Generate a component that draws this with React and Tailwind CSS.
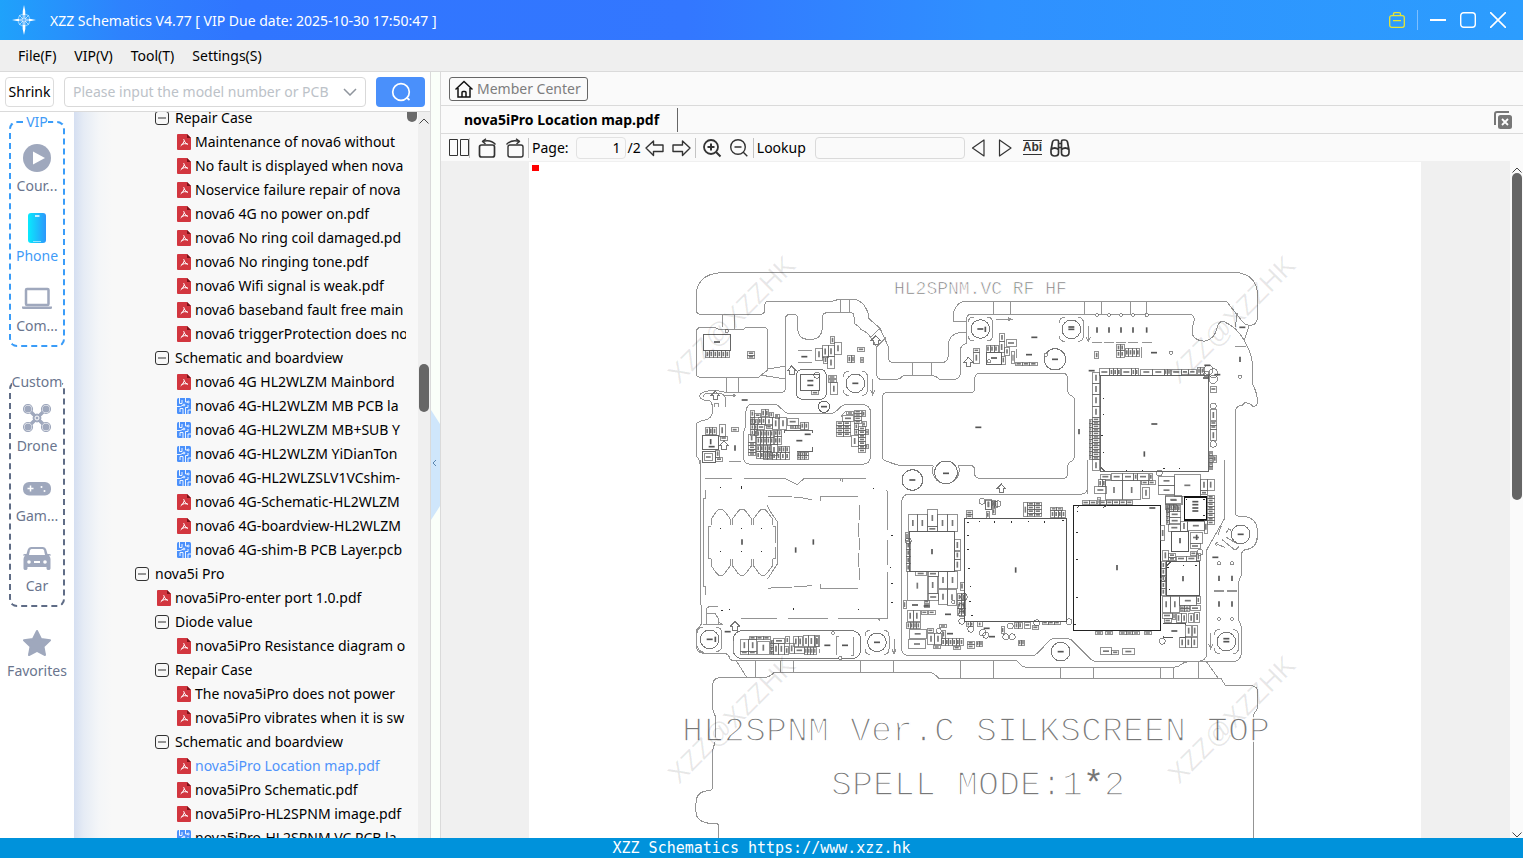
import React, { useState } from "react";

const tree = [
  { level: 2, kind: "folder", name: "Repair Case" },
  { level: 3, kind: "pdf", name: "Maintenance of nova6 without" },
  { level: 3, kind: "pdf", name: "No fault is displayed when nova" },
  { level: 3, kind: "pdf", name: "Noservice failure repair of nova" },
  { level: 3, kind: "pdf", name: "nova6 4G no power on.pdf" },
  { level: 3, kind: "pdf", name: "nova6 No ring coil damaged.pd" },
  { level: 3, kind: "pdf", name: "nova6 No ringing tone.pdf" },
  { level: 3, kind: "pdf", name: "nova6 Wifi signal is weak.pdf" },
  { level: 3, kind: "pdf", name: "nova6 baseband fault free main" },
  { level: 3, kind: "pdf", name: "nova6 triggerProtection does no" },
  { level: 2, kind: "folder", name: "Schematic and boardview" },
  { level: 3, kind: "pdf", name: "nova6 4G HL2WLZM Mainbord" },
  { level: 3, kind: "pcb", name: "nova6 4G-HL2WLZM MB PCB la" },
  { level: 3, kind: "pcb", name: "nova6 4G-HL2WLZM MB+SUB Y" },
  { level: 3, kind: "pcb", name: "nova6 4G-HL2WLZM YiDianTon" },
  { level: 3, kind: "pcb", name: "nova6 4G-HL2WLZSLV1VCshim-" },
  { level: 3, kind: "pdf", name: "nova6 4G-Schematic-HL2WLZM" },
  { level: 3, kind: "pdf", name: "nova6 4G-boardview-HL2WLZM" },
  { level: 3, kind: "pcb", name: "nova6 4G-shim-B PCB Layer.pcb" },
  { level: 1, kind: "folder", name: "nova5i Pro" },
  { level: 2, kind: "pdf", name: "nova5iPro-enter port 1.0.pdf" },
  { level: 2, kind: "folder", name: "Diode value" },
  { level: 3, kind: "pdf", name: "nova5iPro Resistance diagram o" },
  { level: 2, kind: "folder", name: "Repair Case" },
  { level: 3, kind: "pdf", name: "The nova5iPro does not power" },
  { level: 3, kind: "pdf", name: "nova5iPro vibrates when it is sw" },
  { level: 2, kind: "folder", name: "Schematic and boardview" },
  { level: 3, kind: "pdf", name: "nova5iPro Location map.pdf", active: true },
  { level: 3, kind: "pdf", name: "nova5iPro Schematic.pdf" },
  { level: 3, kind: "pdf", name: "nova5iPro-HL2SPNM image.pdf" },
  { level: 3, kind: "pcb", name: "nova5iPro-HL2SPNM VC PCB la" },
];

const indent = { 1: "pl-[61px]", 2: "pl-[81px]", 3: "pl-[101px]" };

const Minus = () => (
  <svg viewBox="0 0 14 14" className="h-3.5 w-3.5 shrink-0" fill="none" stroke="#333">
    <rect x=".5" y=".5" width="13" height="13" rx="2.5" />
    <path d="M3 7h8" />
  </svg>
);

const PdfIcon = () => (
  <svg viewBox="0 0 14 16" className="h-4 w-3.5 shrink-0">
    <path d="M1 0h9l4 4v11a1 1 0 0 1-1 1H1a1 1 0 0 1-1-1V1a1 1 0 0 1 1-1z" fill="#d2363f" />
    <path d="M10 0l4 4h-4z" fill="#7c1219" />
    <path
      d="M6.700 5.500q.6 3.200 3.600 4.800M7 7.500q-.8 2.700-3 4.200M4.800 10.300q2.500-1.200 5.700-.4"
      fill="none"
      stroke="#fff"
      strokeLinecap="round"
    />
  </svg>
);

const PcbIcon = () => (
  <svg viewBox="0 0 14 16" className="h-4 w-3.5 shrink-0">
    <rect width="14" height="16" rx="1.500" fill="#4a90fb" />
    <g fill="none" stroke="#fff" strokeWidth=".9">
      <path d="M2.500 0v5.500H5V2M8.500 0v4h2M0 8.500h3.500L6 7.200M8.500 16V9.500H11V7M6 16v-5.500H3V14M11 16v-4h3" />
      <circle cx="11.300" cy="4" r=".9" />
      <circle cx="7" cy="7" r=".9" />
    </g>
  </svg>
);

const TreeRow = ({ item, active, onSelect }) => (
  <li className="first:-mt-1.5">
    <button
      type="button"
      onClick={onSelect}
      className={`flex h-6 w-full items-center whitespace-nowrap text-left ${indent[item.level]} ${
        item.kind === "folder" ? "gap-1.5" : "gap-1"
      } ${active ? "text-[#4f93fb]" : "text-black"}`}
    >
      {item.kind === "folder" && <Minus />}
      {item.kind === "pdf" && <span className="pl-0.5"><PdfIcon /></span>}
      {item.kind === "pcb" && <span className="pl-0.5"><PcbIcon /></span>}
      <span>{item.name}</span>
    </button>
  </li>
);

const icons = {
  course: (
    <svg viewBox="0 0 28 28" className="h-7 w-7">
      <circle cx="14" cy="14" r="14" fill="#9fa8bd" />
      <path d="M10 7.500v13l12-6.500z" fill="#fff" />
    </svg>
  ),
  phone: (
    <svg viewBox="0 0 28 30" className="h-[30px] w-7">
      <defs>
        <linearGradient id="phone">
          <stop offset="0" stopColor="#09eafd" />
          <stop offset="1" stopColor="#2d97fb" />
        </linearGradient>
      </defs>
      <rect x="5" width="18" height="30" rx="3" fill="url(#phone)" />
      <path d="M12 3h4.500" stroke="#fff" strokeWidth="1.500" />
      <path d="M10 28.500h8" stroke="#8fe6ff" />
    </svg>
  ),
  computer: (
    <svg viewBox="0 0 30 28" className="h-7 w-[30px]" fill="none" stroke="#9fa8bd">
      <rect x="4" y="5" width="22.500" height="16" rx="1" strokeWidth="2.500" />
      <path d="M0 22.500h30v1.500q0 1-1.500 1h-27Q0 25 0 24z" fill="#9fa8bd" stroke="none" />
    </svg>
  ),
  drone: (
    <svg viewBox="0 0 28 28" className="h-7 w-7" fill="none" stroke="#9fa8bd">
      <path d="M5 5l18 18M23 5L5 23" strokeWidth="3.500" />
      {[[5, 5], [23, 5], [5, 23], [23, 23]].map(([x, y]) => (
        <g key={`${x}${y}`}>
          <circle cx={x} cy={y} r="4.500" fill="#fff" strokeWidth="1.200" />
          <circle cx={x} cy={y} r="3.500" fill="#9fa8bd" stroke="none" />
        </g>
      ))}
      <circle cx="14" cy="14" r="4" fill="#9fa8bd" />
      <circle cx="14" cy="14" r="2" stroke="#fff" />
    </svg>
  ),
  game: (
    <svg viewBox="0 0 28 28" className="h-7 w-7">
      <rect y="8" width="28" height="13.500" rx="6" fill="#9fa8bd" />
      <path d="M4.500 14.500h6M7.500 11.500v6" stroke="#fff" strokeWidth="1.500" />
      <circle cx="18.500" cy="13" r="1" fill="#fff" />
      <circle cx="21.500" cy="17" r="1" fill="#fff" />
    </svg>
  ),
  car: (
    <svg viewBox="0 0 28 28" className="h-7 w-7">
      <path
        d="M8 3h12q2.500 0 3.200 2.500L24.500 10h2q1.500 0 1.500 1.500H26q1.500 1.500 1.500 3.500v9.500q0 1.500-2 1.500t-2-1.500V23h-19v1.500q0 1.500-2 1.500t-2-1.500V15q0-2 1.500-3.500H0Q0 10 1.500 10h2l1.300-4.500Q5.500 3 8 3z"
        fill="#9fa8bd"
      />
      <path d="M8.500 5h11q1.200 0 1.600 1.500L22 11H6l.9-4.500Q7.300 5 8.500 5z" fill="#fff" />
      <circle cx="6" cy="18" r="1.800" fill="#fff" />
      <circle cx="22" cy="18" r="1.800" fill="#fff" />
      <path d="M11 18h6" stroke="#fff" strokeWidth="2" />
    </svg>
  ),
  star: (
    <svg viewBox="0 0 28 28" className="h-7 w-7">
      <path
        d="M14 2l4 8 9 1.300-6.500 6.300L22 26l-8-4.200L6 26l1.500-8.400L1 11.300 10 10z"
        fill="#9fa8bd"
        stroke="#9fa8bd"
        strokeWidth="2"
        strokeLinejoin="round"
      />
    </svg>
  ),
};

const NavItem = ({ icon, label, active }) => (
  <button
    type="button"
    className={`flex w-full flex-col items-center gap-1 leading-5 ${active ? "text-[#3f9bf7]" : "text-[#6a758e]"}`}
  >
    <span className="flex h-7 items-center justify-center">{icons[icon]}</span>
    <span>{label}</span>
  </button>
);

const NavRail = () => (
  <nav className="flex w-[74px] shrink-0 flex-col bg-white">
    <fieldset className="mx-[9px] rounded-lg border-2 border-dashed border-[#3a9cf8] pt-3 pb-[9px]">
      <legend className="mx-auto leading-5 text-[#3f9bf7]">VIP</legend>
      <div className="flex flex-col gap-[18px]">
        <NavItem icon="course" label="Cour..." />
        <NavItem icon="phone" label="Phone" active />
        <NavItem icon="computer" label="Com..." />
      </div>
    </fieldset>
    <fieldset className="mx-[9px] mt-[25px] rounded-lg border-2 border-dashed border-[#5f6c86] pt-3 pb-[9px]">
      <legend className="mx-auto leading-5 text-[#6a758e]">Custom</legend>
      <div className="flex flex-col gap-[18px]">
        <NavItem icon="drone" label="Drone" />
        <NavItem icon="game" label="Gam..." />
        <NavItem icon="car" label="Car" />
      </div>
    </fieldset>
    <div className="mt-[22px]">
      <NavItem icon="star" label="Favorites" />
    </div>
  </nav>
);

const Logo = () => (
  <svg viewBox="0 0 24 30" className="h-[30px] w-6">
    <circle cx="12" cy="15" r="6" fill="none" stroke="#7cc8ff" strokeWidth="1.200" />
    <path d="M7 10l10 10M17 10L7 20" stroke="#a8dbff" />
    <path d="M12 0q2 6 1.300 13.700Q18 13.500 24 15q-6 1.500-10.700 1.300Q14 24 12 30q-2-6-1.300-13.700Q6 16.500 0 15q6-1.500 10.700-1.300Q10 6 12 0z" fill="#fff" />
    <path d="M12 10v10M7 15h10" stroke="#3aa0fb" />
  </svg>
);

const TitleBar = () => (
  <header className="flex h-10 shrink-0 items-center bg-[linear-gradient(90deg,#1fa2fb_0%,#2e82fd_8%,#3075ff_16%,#3377ff_45%,#2f90ff_65%,#2c9dfe_100%)] pr-[17px] pl-3 text-white">
    <Logo />
    <h1 className="ml-3.5 flex-1 pt-px">XZZ Schematics V4.77 [ VIP Due date: 2025-10-30 17:50:47 ]</h1>
    <button type="button" aria-label="Toolbox">
      <svg viewBox="0 0 16 16" className="h-4 w-4" fill="none" stroke="#e6e534" strokeWidth="1.300">
        <rect x=".7" y="3.700" width="14.600" height="11.600" rx="2" />
        <path d="M4.500 3.700V2q0-1.300 1.300-1.300h4.400q1.300 0 1.300 1.300v1.700M4 8.700h8" />
      </svg>
    </button>
    <span className="ml-3 h-5 w-px bg-[#7dbfff]" />
    <button type="button" aria-label="Minimize" className="ml-3">
      <svg viewBox="0 0 16 16" className="h-4 w-4" stroke="#fff" strokeWidth="2"><path d="M0 8h16" /></svg>
    </button>
    <button type="button" aria-label="Maximize" className="ml-3.5">
      <svg viewBox="0 0 16 16" className="h-4 w-4" fill="none" stroke="#fff" strokeWidth="1.400">
        <rect x=".7" y=".7" width="14.600" height="14.600" rx="3" />
      </svg>
    </button>
    <button type="button" aria-label="Close" className="ml-3.5">
      <svg viewBox="0 0 16 16" className="h-4 w-4" stroke="#fff" strokeWidth="1.600"><path d="M0 0l16 16M16 0L0 16" /></svg>
    </button>
  </header>
);

const MenuBar = () => (
  <div className="flex h-8 shrink-0 items-center gap-[18px] border-b border-[#dadada] bg-[#efefef] px-[18px] pt-px">
    {["File(F)", "VIP(V)", "Tool(T)", "Settings(S)"].map((m) => (
      <button key={m} type="button">{m}</button>
    ))}
  </div>
);

const SearchRow = () => (
  <form className="flex h-10 shrink-0 items-center border-b border-[#dadada] bg-white px-[5px]">
    <button type="button" className="h-[30px] w-[49px] shrink-0 rounded border border-[#dcdcdc] pt-px text-center">
      Shrink
    </button>
    <label className="ml-2.5 flex h-[30px] min-w-0 flex-1 items-center rounded border border-[#d9d9d9] px-2">
      <input
        type="text"
        aria-label="Model number"
        placeholder="Please input the model number or PCB"
        className="min-w-0 flex-1 pt-px outline-none placeholder:text-[#bcc2c8]"
      />
      <svg viewBox="0 0 14 8" className="ml-1.5 h-2 w-3.5" fill="none" stroke="#8f959d" strokeWidth="1.500">
        <path d="M1 1l6 6 6-6" />
      </svg>
    </label>
    <button type="button" aria-label="Search" className="ml-2.5 flex h-[30px] w-[49px] shrink-0 items-center justify-center rounded bg-[#4a90fb]">
      <svg viewBox="0 0 20 20" className="h-5 w-5" fill="none" stroke="#fff" strokeWidth="1.700">
        <circle cx="10" cy="10" r="8.300" />
        <path d="M15.500 15.500l3 2.500" />
      </svg>
    </button>
  </form>
);

const Sidebar = () => {
  const [selected, setSelected] = useState(tree.findIndex((t) => t.active));

  return (
    <aside className="flex w-[431px] shrink-0 flex-col border-r border-[#dadada]">
      <SearchRow />
      <div className="flex min-h-0 flex-1">
        <NavRail />
        <div className="flex min-w-0 flex-1 bg-[linear-gradient(90deg,#d5dff1_0px,#e6ecf5_10px,#f4f6f8_25px,#f8f8f8_38px)]">
          <ul className="min-w-0 flex-1 overflow-hidden">
            {tree.map((item, i) => (
              <TreeRow key={i} item={item} active={i === selected} onSelect={() => setSelected(i)} />
            ))}
          </ul>
          <div className="w-3 px-px">
            <div className="h-2.5 rounded-b-full bg-[#6a6a6a]" />
          </div>
          <div className="flex w-3 flex-col items-center bg-[#efefef]">
            <svg viewBox="0 0 10 6" className="mt-1.5 h-1.5 w-2.5" fill="none" stroke="#444"><path d="M.5 5.500L5 1l4.500 4.500" /></svg>
            <div className="mt-60 h-12 w-2.5 rounded-full bg-[#666]" />
          </div>
        </div>
      </div>
    </aside>
  );
};

const Splitter = () => (
  <div className="flex w-[9px] shrink-0 items-center bg-[#fafff9] pt-5">
    <button type="button" aria-label="Collapse panel">
      <svg viewBox="0 0 9 110" className="h-[110px] w-[9px]">
        <path d="M0 0l9 14v82l-9 14z" fill="#cfe6fb" />
        <path d="M5 50l-3 3 3 3" fill="none" stroke="#5b86b0" />
      </svg>
    </button>
  </div>
);

const Sep = () => <span className="h-5 w-px bg-[#c4c4c4]" />;

const Tool = ({ label, className = "", children }) => (
  <button type="button" aria-label={label} className={className}>
    <svg viewBox="0 0 20 20" className="h-5 w-5" fill="none" stroke="#333" strokeWidth="1.400" strokeLinejoin="round">
      {children}
    </svg>
  </button>
);

const Toolbar = () => (
  <div className="flex h-[27px] shrink-0 items-center bg-[#fafafa] pl-2">
    <Tool label="Two pages">
      <path d="M.5 1.500h8v16h-8zM11.500 1.500h8v16h-8z" strokeWidth="1" />
    </Tool>
    <Sep />
    <Tool label="Rotate left" className="ml-2">
      <rect x="1.500" y="7" width="15" height="12" rx="2" strokeWidth="1.700" />
      <path d="M5 3.300q8-2 12.500 3.200M8 .8L4.500 3.400 7.500 6" />
    </Tool>
    <Tool label="Rotate right" className="ml-1.5">
      <rect x="4" y="7" width="15" height="12" rx="2" />
      <path d="M15 3.300q-8-2-12.500 3.200M12 .8l3.500 2.600-3 2.600" />
    </Tool>
    <span className="w-1" />
    <Sep />
    <label htmlFor="page" className="ml-[3px]">Page:</label>
    <input
      id="page"
      type="text"
      defaultValue="1"
      className="ml-[7px] h-[22px] w-[50px] rounded-sm border border-[#e2e2e2] px-1 text-right"
    />
    <span className="ml-0.5">/2</span>
    <Tool label="Previous page" className="ml-1">
      <path d="M1 10l7.500-7v4H18v6.500H8.500v4z" />
    </Tool>
    <Tool label="Next page" className="ml-1.5">
      <path d="M19 10l-7.500-7v4H2v6.500h9.500v4z" />
    </Tool>
    <span className="w-1" />
    <Sep />
    <Tool label="Zoom in" className="ml-1.5">
      <circle cx="9" cy="9" r="7" strokeWidth="1.800" />
      <path d="M14 14l4.500 4.500M9 5.500v7M5.500 9h7" strokeWidth="2" />
    </Tool>
    <Tool label="Zoom out" className="ml-[7px]">
      <circle cx="9" cy="9" r="7.300" />
      <path d="M14.300 14.300l4 4M5.500 9h7" />
    </Tool>
    <span className="w-1" />
    <Sep />
    <label htmlFor="lookup" className="ml-[3px]">Lookup</label>
    <input id="lookup" type="text" className="ml-[9px] h-[22px] w-[150px] rounded-sm border border-[#dadada] px-1" />
    <Tool label="Find previous" className="ml-1">
      <path d="M15 2v16L3.500 10z" strokeWidth="1.200" />
    </Tool>
    <Tool label="Find next" className="ml-1.5">
      <path d="M4.500 2v16L16 10z" strokeWidth="1.200" />
    </Tool>
    <button type="button" className="ml-2 border-y border-[#333] font-['Liberation_Sans',sans-serif] text-[12px] leading-[13px] font-bold text-[#333]">
      Abi
    </button>
    <Tool label="Find all" className="ml-2">
      <path d="M1 12L2.500 4Q3 2 5 2h2q1.500 0 1.500 1.500V15q0 3-3.700 3T1 14.500zM19 12l-1.500-8Q17 2 15 2h-2q-1.500 0-1.500 1.500V15q0 3 3.700 3t3.800-3.500zM8.500 5.500h3M1 11.500q3.700-3 7.500 0M11.500 11.500q3.700-3 7.500 0M8.500 9.500h3" strokeWidth="1.700" />
    </Tool>
  </div>
);

/* board drawing: every tile below is drawn in thirds of a pixel */

const Tile = ({ x, y, sx = 1 / 3, children }) => (
  <g transform={`translate(${x} ${y}) scale(${sx} ${1 / 3})`}>{children}</g>
);

const Outline = ({ d, stroke = "#949494" }) => (
  <path d={d} fill="none" stroke={stroke} vectorEffect="non-scaling-stroke" />
);

const Mark = ({ x, y, v }) => (
  <path
    d={v ? `M${x} ${y - 8}v16` : `M${x - 9} ${y}h18`}
    stroke="#555"
    strokeWidth="5"
    fill="none"
    shapeRendering="auto"
  />
);

const Marks = ({ list, v }) => list.map(([x, y], i) => <Mark key={i} x={x} y={y} v={v} />);

// small parts: outlined body with a reference label along the long side
const Chips = ({ list, stroke = "#5c5c5c" }) =>
  list.map(([x, y, w, h], i) => {
    const len = Math.min(18, Math.max(w, h) * 0.6);
    return (
      <g key={i}>
        <rect x={x} y={y} width={w} height={h} fill="none" stroke={stroke} strokeWidth="2" />
        <path
          d={w > h ? `M${x + (w - len) / 2} ${y + h / 2}h${len}` : `M${x + w / 2} ${y + (h - len) / 2}v${len}`}
          stroke="#777"
          strokeWidth={Math.min(5, Math.min(w, h) * 0.45)}
          shapeRendering="auto"
        />
      </g>
    );
  });

const grid = (x, y, cols, rows, w, h) =>
  Array.from({ length: cols * rows }, (_, i) => [x + (i % cols) * w, y + Math.floor(i / cols) * h, w, h]);

const UpArrow = ({ x, y }) => (
  <Outline stroke="#777" d={`M${x} ${y - 13}l13 14h-6v12h-14v-12h-6z`} />
);

const Screw = ({ x, y, r = 28, frame = true }) => (
  <>
    <circle cx={x} cy={y} r={r} fill="none" stroke="#777" vectorEffect="non-scaling-stroke" />
    {frame && (
      <Outline d={`M${x - 36} ${y - 20}q0-16 16-16M${x + 20} ${y - 36}q16 0 16 16v40q0 16-16 16M${x - 20} ${y + 36}q-16 0-16-16`} />
    )}
    <Mark x={x} y={y} />
  </>
);

const TopLeft = () => (
  <Tile x={660} y={250}>
    <Outline d="M900 68H180Q108 75 108 140V180Q110 193 122 193H300Q314 193 314 180V165Q316 153 328 153H520Q528 153 532 148H585Q615 155 626 195V205L660 235L685 290V325Q688 338 700 338H845Q862 338 864 320V285Q868 250 905 247H920" />
    <Outline d="M920 280Q902 285 901 300V370Q900 388 880 388H838Q830 378 815 377H730Q722 386 710 388H664Q652 388 650 375V290L632 262Q620 245 603 238Q595 228 585 222Q582 215 582 200Q582 188 572 188H500Q486 190 486 205V240Q482 268 455 268H440Q414 265 413 235V205Q412 193 400 193H388Q377 195 377 205V415Q375 427 362 427H195Q185 422 150 422Q120 425 119 438Q122 452 150 453Q158 460 158 480Q158 505 135 510Q110 515 108 525V612Q109 622 115 626Q121 632 121 660" />
    <Outline d="M188 193V232M224 193V238M541 148V188M568 148V188M757 338V377M814 338V377M200 382V427M236 382V427M323 357L377 348M300 375L377 387M632 262L660 235M650 290L678 262" />
    <Outline d="M120 232H165L175 238H250Q255 232 265 232H312Q323 234 323 245V360L300 378Q298 382 290 382H120Q108 380 108 368V248Q108 236 120 232" />
    <Outline d="M275 462H345Q355 466 362 474L375 486Q380 490 388 490H515Q525 488 530 482L545 468Q552 463 562 463H605Q632 465 632 490V620Q630 643 605 643H270Q251 641 251 622V545L257 530V490Q258 465 275 462" />
    <Outline d="M413 301H457M413 338H457M190 436H226M218 431L227 436L218 441M638 388V434M632 420L638 435L644 420M208 634H242M130 440Q130 430 145 430H180Q196 432 197 450V472M175 472V460H162V472" />
    <Outline stroke="#666" d="M130 253H212V300H130zM422 374H478V420H422zM375 540H458V548M458 590V603H410M372 540V548M126 555H176V598H126zM128 603H165V637H128z" />
    <rect x="409" y="358" width="90" height="90" rx="18" fill="none" stroke="#777" vectorEffect="non-scaling-stroke" />
    <circle cx="470" cy="376" r="9" fill="none" stroke="#555" strokeWidth="2" />
    <circle cx="200" cy="243" r="5" fill="none" stroke="#555" strokeWidth="2" />
    <circle cx="492" cy="470" r="17" fill="none" stroke="#666" vectorEffect="non-scaling-stroke" />
    <Chips
      list={[
        ...grid(136, 301, 6, 1, 12, 22), ...grid(262, 304, 1, 2, 22, 11),
        [511, 259, 13, 22], [524, 278, 20, 34], [487, 287, 17, 35], [504, 287, 18, 33], [467, 296, 20, 34],
        [490, 320, 13, 20], [503, 320, 20, 35], [592, 292, 22, 12], [562, 316, 12, 22], [574, 316, 10, 22],
        [601, 322, 10, 16], [454, 422, 22, 12], [504, 376, 24, 10], [504, 388, 24, 10], [511, 398, 21, 36],
        ...grid(136, 532, 3, 1, 11, 22), [177, 524, 19, 34], [214, 533, 20, 12], [180, 558, 22, 12],
        [167, 600, 12, 22], [167, 622, 20, 11], [133, 610, 24, 22],
      ]}
    />
    <Chips
      list={[
        ...grid(271, 481, 1, 2, 12, 20), [284, 490, 18, 11], ...grid(304, 478, 2, 1, 11, 22), [328, 486, 12, 16],
        ...grid(272, 507, 2, 3, 10, 16), ...grid(294, 503, 2, 1, 11, 19), [292, 524, 22, 14], [317, 503, 20, 22],
        [338, 503, 18, 34], [358, 503, 22, 34], [381, 505, 34, 20], [390, 526, 16, 10], [407, 526, 14, 10],
        ...grid(421, 517, 2, 1, 12, 20), ...grid(290, 540, 5, 2, 10, 21), ...grid(342, 540, 2, 1, 11, 18),
        [265, 552, 20, 24], ...grid(266, 577, 1, 4, 20, 10), ...grid(289, 585, 4, 2, 11, 20), [332, 584, 20, 32],
        ...grid(342, 560, 2, 1, 11, 22), ...grid(354, 588, 3, 1, 11, 20), ...grid(310, 608, 6, 1, 13, 20),
        ...grid(411, 606, 3, 2, 11, 11), [345, 492, 12, 12], [318, 524, 18, 12],
      ]}
    />
    <Chips
      list={[
        ...grid(529, 514, 2, 4, 21, 11), [547, 496, 34, 18], ...grid(582, 480, 1, 4, 22, 10), [560, 484, 20, 10],
        [582, 520, 14, 18], [606, 482, 10, 18], [606, 514, 12, 16], ...grid(596, 530, 1, 7, 20, 11), [574, 556, 20, 34],
        [616, 538, 10, 16], [583, 538, 12, 16], [616, 582, 8, 14],
      ]}
    />
    <Outline d="M543 500L556 484" />
    <UpArrow x={395} y={361} />
    <UpArrow x={647} y={270} />
    <UpArrow x={192} y={585} />
    <UpArrow x={166} y={436} />
    <UpArrow x={925} y={335} />
    <Screw x={586} y={400} />
    <Marks list={[[171, 276], [433, 320], [254, 450], [492, 470], [418, 572], [443, 553], [451, 392], [451, 406], [155, 590]]} />
    <Marks v list={[[225, 594], [152, 575]]} />
    <Chips list={[[940, 296, 18, 10], [940, 306, 18, 34]]} />
  </Tile>
);

const TopRight = () => (
  <Tile x={960} y={250}>
    <Outline d="M0 68H835Q890 78 892 130V205Q890 226 870 226Q858 226 850 218L808 165Q803 153 790 153H20Q-12 155 -20 190V214H20" />
    <Outline d="M20 280V210Q20 193 32 193H690Q703 195 703 210Q695 235 698 255Q710 275 735 273Q765 268 772 230Q778 213 790 214Q830 230 853 272Q875 310 877 340V400Q892 430 893 455Q890 470 880 470Q868 458 855 458Q848 468 838 468Q827 472 827 485V640" />
    <Outline d="M100 153V193M151 153V193M373 153V193M424 153V193M511 153V193M559 153V193M832 190L826 230M868 226L852 272M824 290H858M108 208H155M143 203L156 208L143 213M385 228V275M379 262L385 275L391 262" />
    <Outline d="M33 427H-215Q-233 427 -233 445V625Q-232 632 -180 647H-80M33 427Q44 427 44 415V385Q45 370 60 370H310Q323 372 323 385V420Q325 435 335 438Q344 442 344 455V615Q342 632 330 636Q323 640 323 650V672Q322 685 308 685H60Q44 685 44 670V660Q44 647 32 647H-5A40 40 0 1 1 -80 647" />
    <Outline d="M395 277H425M432 277H462M468 277H497M504 277H533M545 277H575M545 290V323M170 297V325" />
    <circle cx="-42" cy="667" r="34" fill="none" stroke="#777" vectorEffect="non-scaling-stroke" />
    <Mark x={-42} y={670} />
    <Outline stroke="#666" d="M420 377H746V664H420zM420 650L434 664M80 308H124V342H80z" />
    <Screw x={61} y={237} />
    <Screw x={334} y={238} />
    <Screw x={285} y={328} r={32} frame={false} />
    {[[411, 195], [447, 195], [483, 195], [519, 195], [560, 195], [633, 308], [840, 380], [258, 314], [87, 334]].map(([x, y]) => (
      <circle key={x} cx={x} cy={y} r="5" fill="#fff" stroke="#555" strokeWidth="2" />
    ))}
    {[[745, 360, 14], [760, 370, 14], [760, 388, 13], [760, 468, 9], [760, 582, 10], [598, 669, 9], [740, 372, 9], [66, 754, 9], [114, 761, 9]].map(([x, y, r], i) => (
      <circle key={i} cx={x} cy={y} r={r} fill="none" stroke="#555" strokeWidth="2" />
    ))}
    <Chips
      list={[
        ...grid(78, 285, 3, 1, 12, 22), [119, 250, 14, 24], [118, 275, 14, 32],
        [138, 268, 30, 22], [134, 293, 14, 22], [125, 318, 10, 24], [155, 305, 8, 36], ...grid(165, 336, 3, 1, 22, 11),
        ...grid(470, 283, 2, 2, 11, 19), ...grid(495, 296, 4, 1, 11, 22), [404, 304, 12, 22],
        [418, 356, 30, 20], ...grid(449, 356, 3, 1, 11, 20), [484, 356, 30, 20], ...grid(515, 356, 2, 1, 10, 20),
        [541, 357, 36, 18], [578, 357, 34, 18], ...grid(612, 357, 2, 1, 10, 18), [633, 357, 31, 18], [665, 359, 20, 13], [686, 359, 22, 13],
        ...grid(712, 352, 2, 1, 10, 20), ...grid(397, 366, 1, 4, 22, 34), ...grid(397, 503, 1, 12, 22, 10.5), [397, 629, 22, 33],
        ...grid(388, 508, 1, 10, 8, 12), [750, 478, 20, 34], ...grid(750, 513, 1, 2, 20, 12), [750, 539, 20, 33],
        ...grid(748, 604, 1, 5, 10, 11), [759, 615, 11, 22], [750, 408, 20, 18],
      ]}
    />
    <Chips
      list={[
        [420, 672, 32, 16], [453, 670, 34, 20], [488, 670, 32, 20], [521, 670, 12, 20], [533, 670, 32, 20], [567, 670, 11, 20],
        [544, 692, 20, 11], [565, 692, 20, 11], ...grid(415, 689, 2, 1, 11, 21), [403, 710, 36, 20], [437, 692, 50, 56],
        [488, 692, 54, 56], [548, 712, 20, 33], [595, 679, 49, 27], [595, 707, 49, 27], [643, 674, 78, 64],
        ...grid(722, 688, 2, 1, 20, 32), [616, 737, 48, 24], ...grid(366, 752, 2, 1, 22, 11), ...grid(418, 750, 5, 1, 20, 14),
        [722, 722, 20, 12], ...grid(617, 764, 3, 1, 11, 14), [413, 742, 8, 22],
        [76, 749, 18, 28], ...grid(95, 755, 2, 1, 8, 16),
      ]}
    />
    <Outline d="M383 733V715" />
    <UpArrow x={124} y={715} />
    <Marks v list={[[411, 240], [447, 240], [483, 240], [519, 240], [560, 240], [357, 545], [840, 328], [553, 612], [76, 238]]} />
    <Marks list={[[223, 262], [207, 314], [582, 308], [847, 232], [55, 532], [583, 522], [334, 231], [102, 324], [395, 362], [742, 346], [738, 384], [772, 374]]} />
    <Outline stroke="#333" d="M428 445h4M428 494h4M424 556h4M428 606h4M497 660h4M545 660h4M610 654h4M656 654h4" />
  </Tile>
);

const BottomLeft = () => (
  <Tile x={660} y={460}>
    <Outline d="M121 0V432L125 440V490L118 502Q108 508 108 520V555Q110 578 130 580H195Q205 582 208 592Q210 601 220 601H870M117 570Q125 580 135 580" />
    <Outline d="M135 55H217M253 55H375L412 74L425 62Q430 55 440 55H617M541 55V64M548 55V66M137 90V115H131V380H137V404M680 90Q684 95 683 105V210M683 240V315M683 335V475H655L660 482L652 475H535M505 475H383M352 475H243" />
    <Outline d="M325 110H395M402 112L430 114L455 119M325 386L340 382H395M402 381L430 380L455 376M481 122V110H595M481 373V385H595M598 135V180M596 190V230M598 235V270M596 280V320M598 325V360M322 135L328 150L352 185V312L322 358" />
    {[182, 246, 309].map((x) => (
      <g key={x}>
        <Outline d={`M${x - 28} 195V176L${x - 12} 154Q${x} 140 ${x + 12} 154L${x + 28} 176V195`} />
        <Outline d={`M${x - 28} 298V318L${x - 12} 340Q${x} 354 ${x + 12} 340L${x + 28} 318V298`} />
      </g>
    ))}
    <Outline d="M154 198H145V295H154M338 198H347V250M347 262V295H338M211 180V195M217 180V195M211 298V312M217 298V312M275 180V195M275 298V312" />
    <rect x="220" y="512" width="382" height="84" rx="26" fill="none" stroke="#777" vectorEffect="non-scaling-stroke" />
    <Outline d="M530 585V530H536M580 530V585H574M477 568V580M228 601L260 652M287 601V652M362 601V637M400 601V637M602 601V637M700 601V637M902 601V655M702 538V580M696 567L702 582L708 567M138 494V450Q140 440 152 440H175M140 487V460H165L175 475V494M130 494H188M178 488L188 494M218 540Q222 540 222 580" />
    <Outline stroke="#666" d="M748 215H883V333H748z" />
    <UpArrow x={225} y={497} />
    <Screw x={149} y={538} />
    <Screw x={651} y={547} />
    <Screw x={757} y={60} r={31} frame={false} />
    <circle cx="519" cy="519" r="5" fill="#fff" stroke="#555" strokeWidth="2" />
    <circle cx="541" cy="594" r="5" fill="#fff" stroke="#555" strokeWidth="2" />
    <Chips
      list={[
        [241, 537, 24, 37], [266, 537, 24, 37], ...grid(267, 528, 3, 1, 21, 11), ...grid(241, 574, 2, 1, 24, 8),
        [291, 543, 38, 40], ...grid(330, 540, 1, 4, 11, 11), [341, 536, 32, 13], [341, 550, 14, 33], [356, 550, 16, 33],
        [374, 560, 12, 23], [377, 530, 10, 20], [388, 549, 14, 32], ...grid(401, 530, 2, 1, 13, 28), ...grid(430, 527, 3, 1, 16, 32),
        [404, 562, 28, 18], ...grid(433, 562, 4, 1, 9, 20), [466, 530, 10, 28],
        [745, 164, 27, 50], [773, 164, 28, 50], [802, 149, 30, 50], [802, 199, 30, 15], [833, 164, 29, 50], [863, 164, 29, 50],
        ...grid(739, 245, 1, 4, 11, 22), [736, 216, 10, 26], [883, 238, 18, 34], [883, 273, 18, 24], [883, 297, 18, 34],
        [743, 334, 58, 86], [765, 334, 34, 13], [804, 334, 30, 14], [804, 350, 28, 50], [804, 401, 31, 20],
        [835, 334, 28, 52], [863, 334, 29, 52], [835, 387, 28, 46], [863, 387, 26, 50],
        [730, 422, 8, 24], [792, 420, 16, 10], [792, 432, 16, 10], [783, 452, 20, 10], [805, 452, 20, 10],
        [741, 450, 19, 34], [761, 450, 19, 34], ...grid(740, 486, 4, 1, 10, 20), [748, 508, 50, 27], [745, 539, 52, 26],
        [801, 506, 20, 10], [803, 520, 20, 33], [824, 520, 20, 33], [846, 510, 9, 24], [839, 493, 20, 10], ...grid(844, 536, 6, 1, 11, 20),
        [820, 556, 20, 10], [880, 558, 20, 10], [900, 366, 12, 24], ...grid(893, 400, 2, 3, 11, 22),
      ]}
    />
    {[[745, 243, 9], [880, 426, 5], [903, 440, 9], [905, 462, 9], [905, 484, 9], [836, 512, 8], [912, 410, 10]].map(([x, y, r], i) => (
      <circle key={i} cx={x} cy={y} r={r} fill="none" stroke="#555" strokeWidth="2" />
    ))}
    <Marks list={[[203, 515], [502, 556], [555, 556], [765, 435], [800, 438], [864, 463], [870, 521]]} />
    <Marks v list={[[246, 246], [407, 270], [460, 246], [816, 275], [166, 538]]} />
    <Outline stroke="#333" d="M180 82h4M245 78v10M638 86h5M179 205h4M243 204h4M303 204h4M179 274h4M243 274h4M303 274h4M694 225h4M690 322h4M694 370h4M694 426h4M400 444v7M593 447h5M184 450h5M207 449h4" />
  </Tile>
);

const BottomRight = () => (
  <Tile x={950} y={460}>
    <Outline d="M857 0V165Q860 170 885 170Q922 175 922 215V230Q920 265 890 268Q875 270 874 285V345L866 365V480L874 500V580Q872 605 845 605H715Q700 607 690 615Q686 621 675 621H225Q218 621 212 614L203 604Q198 601 190 601H0" />
    <Outline d="M412 0V85Q410 102 395 102H-125Q-145 105 -145 130V570Q-142 587 -120 587H245Q255 587 262 580L298 542Q302 536 312 536H355Q365 538 370 545L425 600Q430 604 440 604H745Q770 602 770 580V270L824 175V0" />
    <Outline d="M32 601V655M130 601V655M331 621V655M430 621V655M631 621V655M669 621V655M745 606V655M770 606L805 655M782 520V565M776 552L782 567L788 552M792 391H822M831 391H861M792 394H822M831 394H861M795 250L824 262M795 250L803 247M795 250L800 257" />
    <Outline d="M829 232L862 252M805 225Q808 205 816 198M815 238L852 268Q862 270 866 258M828 220L836 206Q842 208 846 220" />
    <Outline stroke="#555" d="M44 175H350V484H44zM648 305H748V407H648zM664 215H715V274H664z" />
    <rect x="370" y="136" width="262" height="375" fill="none" stroke="#222" strokeWidth="4" />
    <rect x="703" y="110" width="66" height="70" fill="none" stroke="#111" strokeWidth="5" />
    <Outline stroke="#555" d="M380 145L388 137M460 142L470 137M650 318L662 306M640 491H705V495M640 528V532H668M690 532H705V528" />
    <Screw x={332} y={575} frame={false} />
    <Screw x={872} y={223} frame={false} />
    <Screw x={829} y={545} />
    <Chips
      list={[
        [107, 120, 17, 27], [126, 122, 10, 18], [126, 144, 10, 20], [108, 154, 11, 20],
        ...grid(48, 152, 1, 2, 20, 11), [221, 128, 10, 42], ...grid(232, 126, 2, 4, 21, 11), ...grid(302, 142, 2, 1, 18, 9), ...grid(302, 152, 4, 1, 11, 20),
        [646, 108, 50, 25], ...grid(648, 135, 4, 1, 11, 20), [658, 155, 32, 16], [658, 173, 32, 18], ...grid(648, 145, 1, 4, 10, 12),
        [656, 193, 34, 20], [692, 183, 20, 30], [713, 183, 49, 28], [762, 180, 11, 40], ...grid(772, 105, 1, 8, 20, 11),
        [720, 216, 36, 33], [720, 250, 30, 16], [632, 196, 12, 46], [637, 270, 18, 32], ...grid(656, 280, 1, 2, 20, 11), [678, 288, 30, 15],
        [709, 288, 30, 15], [720, 274, 20, 12], [740, 280, 10, 22], ...grid(634, 305, 1, 5, 12, 20), [636, 410, 25, 46], [662, 410, 25, 46],
        [688, 408, 51, 28], ...grid(690, 437, 2, 2, 14, 9), [720, 437, 30, 15], [740, 410, 10, 20], [636, 459, 30, 15], [642, 476, 22, 11],
        [667, 459, 10, 20], [678, 460, 15, 28], [695, 460, 15, 28], [716, 460, 15, 28], [734, 456, 15, 30],
        [707, 496, 18, 32], [726, 496, 16, 32], [688, 533, 17, 28], [707, 533, 16, 28], [725, 533, 16, 28],
        [436, 514, 22, 10], [466, 514, 22, 10], ...grid(508, 514, 3, 1, 20, 10), [582, 514, 22, 10], [451, 563, 34, 21], [485, 571, 21, 12], [517, 565, 36, 19],
        ...grid(50, 485, 2, 1, 10, 14), [82, 485, 14, 14], [153, 500, 10, 20], ...grid(194, 486, 2, 1, 11, 20), [222, 486, 20, 18], [246, 496, 20, 12], ...grid(276, 483, 3, 1, 18, 10),
        ...grid(204, 540, 2, 1, 10, 16), ...grid(52, 543, 1, 2, 20, 11), ...grid(78, 543, 2, 1, 10, 16),
      ]}
    />
    {[[62, 508, 9], [98, 518, 10], [107, 526, 9], [167, 530, 9], [187, 530, 9], [181, 498, 9], [260, 488, 9], [357, 485, 9], [637, 544, 9], [640, 356, 8], [750, 277, 9], [807, 310, 5], [846, 310, 5], [807, 477, 5], [846, 477, 5]].map(([x, y, r], i) => (
      <circle key={i} cx={x} cy={y} r={r} fill="none" stroke="#555" strokeWidth="2" />
    ))}
    <Marks v list={[[197, 330], [501, 323], [690, 242], [699, 356], [807, 355], [846, 355], [807, 432], [846, 432], [740, 232]]} />
    <Marks list={[[736, 125], [736, 134], [736, 144], [736, 153], [796, 292], [829, 536], [673, 513], [607, 144], [110, 505], [126, 530]]} />
    <Outline stroke="#333" d="M52 188h5M87 184h4M133 182v6M183 182v6M233 184h4M284 182v6M52 225h4M52 267h4M55 325h4M59 380h4M58 424h5M62 467h8M336 180h6M382 152v4M379 217h4M379 298h4M379 413h4M373 493h6M707 119h5M759 119h5M759 167h5M652 322h4M698 316h4M736 316h4M656 388h4" />
  </Tile>
);

const LowerBoard = () => (
  <Tile x={640} y={650} sx={680 / 1568}>
    <Outline d="M182 570V530Q182 520 172 520H160Q129 515 129 485V460Q130 422 160 422Q168 420 168 410V300L174 270V200L168 180V100Q170 82 190 82H290Q300 80 310 67H670Q675 67 690 86H1340L1350 107H1410Q1424 110 1424 125V175L1414 195V570" />
  </Tile>
);

const Watermark = ({ x, y }) => (
  <text transform={`translate(${x} ${y}) rotate(-45)`} fontSize="27" fill="#000" fillOpacity="0.09">
    XZZ@XZZHK
  </text>
);

const BoardPage = () => (
  <svg
    viewBox="529 162 892 676"
    preserveAspectRatio="xMidYMin slice"
    className="h-full w-full max-w-[892px] bg-white font-['Liberation_Sans',sans-serif]"
    role="img"
    aria-label="HL2SPNM board location map"
  >
    <rect x="532" y="165" width="7" height="6" fill="#f00" />
    <g shapeRendering="crispEdges">
      <TopLeft />
      <TopRight />
      <BottomLeft />
      <BottomRight />
      <LowerBoard />
    </g>
    <g className="font-['Liberation_Mono',monospace]" fill="#777" stroke="#fff">
      <text x="894" y="294" fontSize="18" strokeWidth="0.700">HL2SPNM.VC RF HF</text>
      <text x="682" y="741" fontSize="35" strokeWidth="1.600">HL2SPNM Ver.C SILKSCREEN TOP</text>
      <text x="831" y="795" fontSize="35" strokeWidth="1.600">
        SPELL MODE:1<tspan stroke="none">*</tspan>2
      </text>
    </g>
    <Watermark x={679} y={385} />
    <Watermark x={1179} y={385} />
    <Watermark x={679} y={785} />
    <Watermark x={1179} y={785} />
  </svg>
);

const Viewer = () => (
  <main className="flex min-w-0 flex-1 flex-col border-l border-[#dadada] bg-[#fafafa]">
    <div className="flex h-[34px] shrink-0 items-center border-b border-[#dadada] pl-2">
      <button type="button" className="flex h-6 items-center rounded-[3px] border border-[#666] pr-1.5 pl-[5px] text-[#7d7d7d]">
        <svg viewBox="0 0 18 18" className="mr-1 h-[18px] w-[18px]" fill="none" stroke="#111" strokeWidth="1.500">
          <path d="M.5 9.500L9 1.500l8.500 8M3 8v9h12V8M7 17v-4.500q0-1 1-1h2q1 0 1 1V17" />
        </svg>
        Member Center
      </button>
    </div>
    <div className="flex h-7 shrink-0 items-center border-b border-[#dadada] pr-[11px]">
      <button type="button" className="h-6 border-r border-[#666] pr-[18px] pl-[23px] font-bold">
        nova5iPro Location map.pdf
      </button>
      <button type="button" aria-label="Close all tabs" className="ml-auto">
        <svg viewBox="0 0 18 18" className="h-[18px] w-[18px]">
          <path d="M1 14V3q0-2 2-2h12" fill="none" stroke="#777" strokeWidth="2" />
          <rect x="4" y="4" width="14" height="14" rx="2.500" fill="#777" />
          <path d="M8 8l6 6M14 8l-6 6" stroke="#fff" strokeWidth="1.800" />
        </svg>
      </button>
    </div>
    <Toolbar />
    <div className="flex min-h-0 flex-1 bg-[#f0f0f0]">
      <div className="flex min-w-0 flex-1 justify-center pt-px pr-px">
        <BoardPage />
      </div>
      <div className="flex w-[13px] flex-col items-center bg-[#fafafa]">
        <svg viewBox="0 0 10 6" className="mt-1.5 h-1.5 w-2.5 shrink-0" fill="none" stroke="#444"><path d="M.5 5.500L5 1l4.500 4.500" /></svg>
        <div className="h-[327px] w-2.5 shrink-0 rounded-full bg-[#666]" />
        <svg viewBox="0 0 10 6" className="mt-auto h-1.5 w-2.5 shrink-0" fill="none" stroke="#444"><path d="M.5 .5L5 5l4.500-4.500" /></svg>
      </div>
    </div>
  </main>
);

const App = () => (
  <div className="flex h-screen flex-col overflow-hidden bg-white font-['Noto_Sans','Noto_Sans_CJK_SC',sans-serif] text-[14px] leading-5 text-black">
    <TitleBar />
    <MenuBar />
    <div className="flex min-h-0 flex-1">
      <Sidebar />
      <Splitter />
      <Viewer />
    </div>
    <footer className="h-5 shrink-0 bg-[#0092db] text-center font-['DejaVu_Sans_Mono',monospace] text-[15px] leading-5 text-white">
      XZZ Schematics https://www.xzz.hk
    </footer>
  </div>
);

export default App;
